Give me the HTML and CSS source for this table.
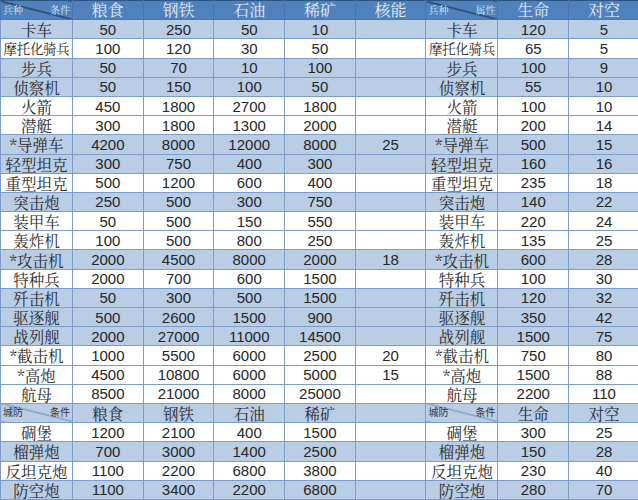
FILE: index.html
```html
<!DOCTYPE html>
<html lang="zh">
<head>
<meta charset="utf-8">
<link rel="stylesheet" href="styles.css">
</head>
<body>
<table class="grid">
<colgroup>
<col class="c-name"><col><col><col><col><col><col class="c-name"><col><col>
</colgroup>
<tr class="head">
<td class="diag"><div class="diag-in"><span>兵种</span><span>条件</span></div></td>
<td>粮食</td><td>钢铁</td><td>石油</td><td>稀矿</td><td>核能</td>
<td class="diag"><div class="diag-in"><span>兵种</span><span>属性</span></div></td>
<td>生命</td><td>对空</td>
</tr>
<tr class="b"><td class="n">卡车</td><td>50</td><td>250</td><td>50</td><td>10</td><td></td><td class="n">卡车</td><td>120</td><td>5</td></tr>
<tr><td class="n sm">摩托化骑兵</td><td>100</td><td>120</td><td>30</td><td>50</td><td></td><td class="n sm">摩托化骑兵</td><td>65</td><td>5</td></tr>
<tr class="b"><td class="n">步兵</td><td>50</td><td>70</td><td>10</td><td>100</td><td></td><td class="n">步兵</td><td>100</td><td>9</td></tr>
<tr class="b"><td class="n">侦察机</td><td>50</td><td>150</td><td>100</td><td>50</td><td></td><td class="n">侦察机</td><td>55</td><td>10</td></tr>
<tr><td class="n">火箭</td><td>450</td><td>1800</td><td>2700</td><td>1800</td><td></td><td class="n">火箭</td><td>100</td><td>10</td></tr>
<tr><td class="n">潜艇</td><td>300</td><td>1800</td><td>1300</td><td>2000</td><td></td><td class="n">潜艇</td><td>200</td><td>14</td></tr>
<tr class="b"><td class="n">*导弹车</td><td>4200</td><td>8000</td><td>12000</td><td>8000</td><td>25</td><td class="n">*导弹车</td><td>500</td><td>15</td></tr>
<tr class="b"><td class="n">轻型坦克</td><td>300</td><td>750</td><td>400</td><td>300</td><td></td><td class="n">轻型坦克</td><td>160</td><td>16</td></tr>
<tr><td class="n">重型坦克</td><td>500</td><td>1200</td><td>600</td><td>400</td><td></td><td class="n">重型坦克</td><td>235</td><td>18</td></tr>
<tr class="b"><td class="n">突击炮</td><td>250</td><td>500</td><td>300</td><td>750</td><td></td><td class="n">突击炮</td><td>140</td><td>22</td></tr>
<tr><td class="n">装甲车</td><td>50</td><td>500</td><td>150</td><td>550</td><td></td><td class="n">装甲车</td><td>220</td><td>24</td></tr>
<tr><td class="n">轰炸机</td><td>100</td><td>500</td><td>800</td><td>250</td><td></td><td class="n">轰炸机</td><td>135</td><td>25</td></tr>
<tr class="b"><td class="n">*攻击机</td><td>2000</td><td>4500</td><td>8000</td><td>2000</td><td>18</td><td class="n">*攻击机</td><td>600</td><td>28</td></tr>
<tr><td class="n">特种兵</td><td>2000</td><td>700</td><td>600</td><td>1500</td><td></td><td class="n">特种兵</td><td>100</td><td>30</td></tr>
<tr class="b"><td class="n">歼击机</td><td>50</td><td>300</td><td>500</td><td>1500</td><td></td><td class="n">歼击机</td><td>120</td><td>32</td></tr>
<tr class="b"><td class="n">驱逐舰</td><td>500</td><td>2600</td><td>1500</td><td>900</td><td></td><td class="n">驱逐舰</td><td>350</td><td>42</td></tr>
<tr class="b"><td class="n">战列舰</td><td>2000</td><td>27000</td><td>11000</td><td>14500</td><td></td><td class="n">战列舰</td><td>1500</td><td>75</td></tr>
<tr><td class="n">*截击机</td><td>1000</td><td>5500</td><td>6000</td><td>2500</td><td>20</td><td class="n">*截击机</td><td>750</td><td>80</td></tr>
<tr><td class="n">*高炮</td><td>4500</td><td>10800</td><td>6000</td><td>5000</td><td>15</td><td class="n">*高炮</td><td>1500</td><td>88</td></tr>
<tr><td class="n">航母</td><td>8500</td><td>21000</td><td>8000</td><td>25000</td><td></td><td class="n">航母</td><td>2200</td><td>110</td></tr>
<tr class="b head2">
<td class="diag diag2"><div class="diag-in"><span>城防</span><span>条件</span></div></td>
<td class="h">粮食</td><td class="h">钢铁</td><td class="h">石油</td><td class="h">稀矿</td><td></td>
<td class="diag diag2"><div class="diag-in"><span>城防</span><span>条件</span></div></td>
<td class="h">生命</td><td class="h">对空</td>
</tr>
<tr><td class="n">碉堡</td><td>1200</td><td>2100</td><td>400</td><td>1500</td><td></td><td class="n">碉堡</td><td>300</td><td>25</td></tr>
<tr class="b"><td class="n">榴弹炮</td><td>700</td><td>3000</td><td>1400</td><td>2500</td><td></td><td class="n">榴弹炮</td><td>150</td><td>28</td></tr>
<tr><td class="n">反坦克炮</td><td>1100</td><td>2200</td><td>6800</td><td>3800</td><td></td><td class="n">反坦克炮</td><td>230</td><td>40</td></tr>
<tr class="b"><td class="n">防空炮</td><td>1100</td><td>3400</td><td>2200</td><td>6800</td><td></td><td class="n">防空炮</td><td>280</td><td>70</td></tr>
</table>
</body>
</html>
```

FILE: styles.css
```css
html, body {
  margin: 0;
  padding: 0;
  background: #ffffff;
}

.grid {
  width: 638px;
  height: 500px;
  border-collapse: collapse;
  table-layout: fixed;
  font-family: "Liberation Sans", "Noto Sans CJK SC", sans-serif;
  color: #262626;
}

.grid col {
  width: 70.7px;
}

.grid col.c-name {
  width: 72px;
}

.grid td {
  border: 1px solid #7d9cc9;
  padding: 0;
  text-align: center;
  vertical-align: middle;
  font-size: 15px;
  line-height: 15px;
  white-space: nowrap;
}

.grid tr.b td {
  background: #b9cde5;
}

.grid td.n,
.grid td.h,
.head td {
  font-family: "Noto Serif CJK SC", "Liberation Serif", "Noto Sans CJK SC", serif;
  font-size: 15.5px;
  line-height: 16px;
  color: #2a2a2a;
}

.grid td.sm {
  font-size: 13.5px;
  letter-spacing: -0.3px;
}

.head td {
  background: #4f81bd;
  color: #e4ecf6;
  border-color: #4a76ad;
  border-top: 1px solid #2f5582;
}

.grid .head td {
  font-size: 16px;
  line-height: 16px;
  color: #e4ecf6;
}

.head td.diag {
  background-color: #4f81bd;
  background-image: linear-gradient(to top right, transparent calc(50% - 1px), #15233d 50%, transparent calc(50% + 1px));
}

.grid tr.head2 td.diag2 {
  background-color: #b9cde5;
  background-image: linear-gradient(to top right, transparent calc(50% - 0.8px), #5d7fae 50%, transparent calc(50% + 0.8px));
}

.diag-in {
  display: flex;
  justify-content: space-between;
  align-items: center;
  padding: 0 2px;
  font-size: 10px;
  line-height: 12px;
}

.head .diag-in {
  color: #d6e2f1;
}

.head2 .diag-in {
  color: #333333;
}
```
